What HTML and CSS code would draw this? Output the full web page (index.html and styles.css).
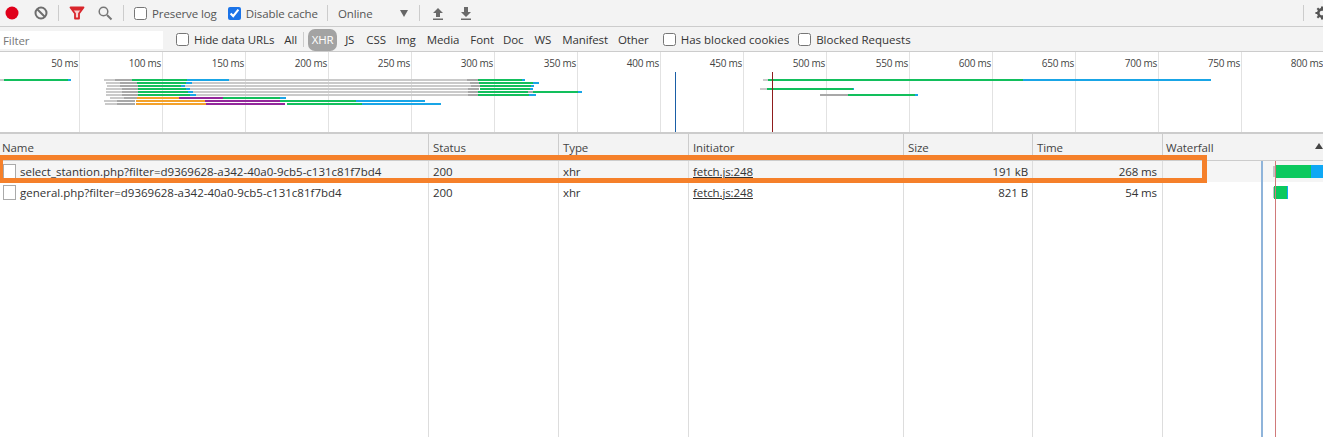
FILE: index.html
```html
<!DOCTYPE html>
<html lang="en">
<head>
<meta charset="utf-8">
<title>Network</title>
<link rel="stylesheet" href="styles.css">
</head>
<body>
<div class="toolbar">
  <svg class="icon record" width="16" height="16" viewBox="0 0 16 16"><circle cx="8" cy="8" r="6.5" fill="#e0001a"/></svg>
  <svg class="icon block" width="16" height="16" viewBox="0 0 16 16"><circle cx="8" cy="8" r="5.5" fill="none" stroke="#6e6e6e" stroke-width="2"/><path d="M4 4l8 8" stroke="#6e6e6e" stroke-width="2"/></svg>
  <span class="sep sep-a"></span>
  <svg class="icon funnel" width="16" height="14" viewBox="0 0 16 14"><path d="M1.5 1.5h13L10 7.500v5H6v-5z" fill="#f6d5d5" stroke="#d9252b" stroke-width="1.800" stroke-linejoin="round"/><path d="M2 2h12l-2 2.500H4z" fill="#d9252b"/></svg>
  <svg class="icon search" width="16" height="16" viewBox="0 0 16 16"><circle cx="6.5" cy="6.5" r="4.3" fill="none" stroke="#777" stroke-width="1.5"/><path d="M10 10l4.5 4.5" stroke="#777" stroke-width="2"/></svg>
  <span class="sep sep-b"></span>
  <label class="check preserve"><input type="checkbox">Preserve log</label>
  <label class="check cache"><input type="checkbox" checked>Disable cache</label>
  <span class="sep sep-c"></span>
  <span class="throttle">Online</span>
  <svg class="caret" width="8" height="7" viewBox="0 0 8 7"><path d="M0 0h8L4 7z" fill="#666"/></svg>
  <span class="sep sep-d"></span>
  <svg class="icon up" width="12" height="13" viewBox="0 0 12 13"><path d="M6 1l5 5H8v4H4V6H1zM1 11.500h10V13H1z" fill="#6a6a6a"/></svg>
  <svg class="icon down" width="12" height="13" viewBox="0 0 12 13"><path d="M4 0h4v5h3l-5 5-5-5h3zM1 11.500h10V13H1z" fill="#6a6a6a"/></svg>
  <span class="spring"></span>
  <span class="sep sep-e"></span>
  <svg class="icon gear" width="14" height="14" viewBox="0 0 16 16"><circle cx="8" cy="8" r="4.200" fill="none" stroke="#555" stroke-width="3"/><path d="M8 0.500v3M8 12.500v3M0.500 8h3M12.500 8h3M2.700 2.700l2 2M11.300 11.300l2 2M13.300 2.700l-2 2M4.700 11.300l-2 2" stroke="#555" stroke-width="2.400"/></svg>
</div>
<div class="filterbar">
  <div class="filter-input">Filter</div>
  <label class="check hide-urls"><input type="checkbox">Hide data URLs</label>
  <span class="type t-all">All</span>
  <span class="sep sep-f"></span>
  <span class="type pill">XHR</span>
  <span class="type t-js">JS</span>
  <span class="type t-css">CSS</span>
  <span class="type t-img">Img</span>
  <span class="type t-media">Media</span>
  <span class="type t-font">Font</span>
  <span class="type t-doc">Doc</span>
  <span class="type t-ws">WS</span>
  <span class="type t-manifest">Manifest</span>
  <span class="type t-other">Other</span>
  <label class="check blocked-c"><input type="checkbox">Has blocked cookies</label>
  <label class="check blocked-r"><input type="checkbox">Blocked Requests</label>
</div>
<div class="overview">
  <div class="ticks">
    <div class="tick first">50 ms</div>
    <div class="tick">100 ms</div>
    <div class="tick">150 ms</div>
    <div class="tick">200 ms</div>
    <div class="tick">250 ms</div>
    <div class="tick">300 ms</div>
    <div class="tick">350 ms</div>
    <div class="tick">400 ms</div>
    <div class="tick">450 ms</div>
    <div class="tick">500 ms</div>
    <div class="tick">550 ms</div>
    <div class="tick">600 ms</div>
    <div class="tick">650 ms</div>
    <div class="tick">700 ms</div>
    <div class="tick">750 ms</div>
    <div class="tick">800 ms</div>
  </div>
  <svg class="bars" width="1323" height="80" viewBox="0 52 1323 80">
    <g stroke-width="2">
      <g stroke="#cacaca">
        <path d="M0 80h4M104 80h11M229 80h238M106 83h14M192 83h278M107 86h13M185 86h286M106 89h16M190 89h278M106 92h16M193 92h275M106 95h16M196 95h272M110 98h14M104 101h13M105 104h12M763 80h5M760 89h7"/>
      </g>
      <g stroke="#a8a8a8">
        <path d="M115 80h17M120 83h17M120 86h18M122 89h16M122 92h16M122 95h16M124 98h13M117 101h18M117 104h18M467 80h11M470 83h9M471 86h9M468 89h11M468 92h10M468 95h10M528 92h5M820 95h28"/>
      </g>
      <g stroke="#12bf5c">
        <path d="M4 80h64M132 80h55M137 83h49M138 86h43M138 89h48M138 92h50M138 95h52M223 98h57M280 101h76M287 104h75M478 80h44M479 83h54M480 86h51M480 89h50M478 92h50M533 92h45M478 95h51M768 80h255M767 89h86M848 95h67"/>
      </g>
      <g stroke="#19a5e6">
        <path d="M68 80h3M187 80h42M186 83h6M181 86h4M186 89h4M188 92h5M190 95h6M280 98h6M356 101h69M362 104h79M522 80h3M533 83h6M531 86h3M530 89h3M578 92h4M529 95h7M1023 80h188M853 89h1M915 95h3"/>
      </g>
      <g stroke="#f3a12a">
        <path d="M137 98h42M136 101h69M136 104h70"/>
      </g>
      <g stroke="#93279b">
        <path d="M179 98h44M205 101h75M206 104h79"/>
      </g>
    </g>
    <path d="M675.500 72v60" stroke="#1a5ea6"/>
    <path d="M772.500 72v60" stroke="#8f1d1d"/>
  </svg>
</div>
<div class="grid">
  <div class="row head">
    <div class="cell">Name</div>
    <div class="cell">Status</div>
    <div class="cell">Type</div>
    <div class="cell">Initiator</div>
    <div class="cell">Size</div>
    <div class="cell">Time</div>
    <div class="cell wf-head">Waterfall<svg class="sort" width="8" height="6" viewBox="0 0 8 6"><path d="M4 0l4 6H0z" fill="#444"/></svg></div>
  </div>
  <div class="row item selected">
    <div class="cell name"><span class="doc"></span>select_stantion.php?filter=d9369628-a342-40a0-9cb5-c131c81f7bd4</div>
    <div class="cell">200</div>
    <div class="cell">xhr</div>
    <div class="cell link">fetch.js:248</div>
    <div class="cell num">191 kB</div>
    <div class="cell num time">268 ms</div>
    <div class="cell wf"><span class="wait w1"></span><span class="seg green g1"></span><span class="seg blue b1"></span></div>
  </div>
  <div class="row item">
    <div class="cell name"><span class="doc"></span>general.php?filter=d9369628-a342-40a0-9cb5-c131c81f7bd4</div>
    <div class="cell">200</div>
    <div class="cell">xhr</div>
    <div class="cell link">fetch.js:248</div>
    <div class="cell num">821 B</div>
    <div class="cell num time">54 ms</div>
    <div class="cell wf"><span class="wait w2"></span><span class="seg green g2"></span><span class="seg blue b2"></span></div>
  </div>
  <div class="row filler">
    <div class="cell"></div><div class="cell"></div><div class="cell"></div><div class="cell"></div><div class="cell"></div><div class="cell"></div><div class="cell"></div>
  </div>
  <span class="line dom"></span>
  <span class="line load"></span>
  <div class="highlight"></div>
</div>
</body>
</html>
```
FILE: styles.css
```css
* { box-sizing: border-box; }
html, body { margin: 0; height: 100%; overflow: hidden; }
body {
  width: 1323px;
  height: 437px;
  display: flex;
  flex-direction: column;
  background: #fff;
  color: #333;
  font-family: "Open Sans", "Liberation Sans", sans-serif;
  font-size: 11.500px;
  letter-spacing: -0.1px;
}

.toolbar {
  height: 27px;
  flex: none;
  display: flex;
  align-items: center;
  background: #f3f3f3;
  border-bottom: 1px solid #ccc;
  color: #555;
  overflow: hidden;
}
.icon, .caret { flex: none; display: block; }
.record { margin-left: 4px; }
.block { margin-left: 13px; }
.sep { flex: none; width: 1px; height: 16px; background: #ccc; }
.sep-a { margin-left: 9px; }
.funnel { margin-left: 10px; }
.search { margin-left: 12px; }
.sep-b { margin-left: 10px; }
.check { display: flex; align-items: center; flex: none; }
.check input {
  width: 13px;
  height: 13px;
  margin: 0 5px 0 0;
  accent-color: #1a73e8;
}
.preserve { margin-left: 10px; }
.cache { margin-left: 11px; }
.sep-c { margin-left: 9px; }
.throttle { margin-left: 10px; }
.caret { margin-left: 27px; }
.sep-d { margin-left: 11px; }
.up { margin-left: 12px; }
.down { margin-left: 16px; }
.spring { flex: 1; }
.sep-e { margin-right: 11px; }
.gear { margin-right: -6px; }

.filterbar {
  height: 25px;
  flex: none;
  display: flex;
  align-items: center;
  background: #f3f3f3;
  border-bottom: 1px solid #ccc;
}
.filter-input {
  width: 163px;
  height: 18px;
  margin-top: 2px;
  padding-left: 3px;
  line-height: 19px;
  background: #fff;
  color: #777;
}
.hide-urls { margin-left: 13px; }
.type { flex: none; }
.t-all { margin-left: 10px; }
.sep-f { margin-left: 6px; height: 15px; }
.pill {
  margin-left: 4px;
  width: 29px;
  height: 22px;
  line-height: 22px;
  text-align: center;
  border-radius: 7px;
  background: #a3a3a3;
  color: #fff;
  margin-top: 2px;
}
.t-js { margin-left: 8px; }
.t-css { margin-left: 12px; }
.t-img { margin-left: 10px; }
.t-media { margin-left: 11px; }
.t-font { margin-left: 11px; }
.t-doc { margin-left: 9px; }
.t-ws { margin-left: 11px; }
.t-manifest { margin-left: 11px; }
.t-other { margin-left: 10px; }
.blocked-c { margin-left: 14px; letter-spacing: 0; }
.blocked-r { margin-left: 9px; letter-spacing: 0; }

.overview {
  position: relative;
  height: 82px;
  flex: none;
  border-bottom: 2px solid #ccc;
  overflow: hidden;
}
.ticks { display: flex; height: 100%; font-size: 10px; letter-spacing: -0.25px; color: #444; }
.tick {
  flex: none;
  width: 83px;
  padding: 4px 1px 0 0;
  text-align: right;
  border-right: 1px solid #e2e2e2;
}
.tick.first { width: 80px; }
.bars { position: absolute; left: 0; top: 0; }

.grid {
  position: relative;
  flex: 1;
  min-height: 0;
  display: flex;
  flex-direction: column;
}
.row {
  display: grid;
  grid-template-columns: 429px 130px 130px 215px 129px 130px 160px;
}
.cell {
  position: relative;
  padding: 0 4px;
  border-right: 1px solid #ddd;
  white-space: nowrap;
}
.cell:last-child { border-right: 0; }
.head { height: 27px; flex: none; background: #f3f3f3; border-bottom: 1px solid #ccc; color: #444; }
.head .cell { padding-top: 5px; line-height: 17px; border-right-color: #ccc; }
.head .cell:first-child { padding-left: 2px; }
.wf-head.cell { padding-left: 3px; }
.item { height: 21px; flex: none; line-height: 21px; }
.selected { background: #f5f5f5; }
.filler { flex: 1; min-height: 0; }
.name { display: flex; align-items: center; padding-left: 3px; letter-spacing: 0; }
.doc {
  flex: none;
  width: 13px;
  height: 15px;
  margin-right: 4px;
  background: #fff;
  border: 1px solid #aaa;
}
.link { text-decoration: underline; }
.num { text-align: right; }
.time { padding-right: 5px; }
.sort { position: absolute; right: 0; top: 9px; }

.wf { overflow: hidden; }
.seg, .wait { position: absolute; top: 4px; height: 13px; }
.green { background: #0bc95e; }
.blue { background: #0fa8f5; }
.wait { top: 5px; height: 11px; width: 3px; background: #c4c4c4; }
.w1 { left: 110px; }
.w2 { left: 110px; }
.g1 { left: 112px; width: 36px; }
.b1 { left: 148px; width: 12px; }
.g2 { left: 111px; width: 13px; }
.b2 { left: 124px; width: 1px; }

.line { position: absolute; top: 27px; bottom: 0; width: 1px; }
.dom { left: 1261px; width: 2px; background: #8fb4da; }
.load { left: 1275px; background: #d07a7a; }

.highlight {
  position: absolute;
  left: 0;
  top: 21px;
  width: 1207px;
  height: 28px;
  border: 5px solid #f5802a;
  border-left-width: 3px;
}
```
